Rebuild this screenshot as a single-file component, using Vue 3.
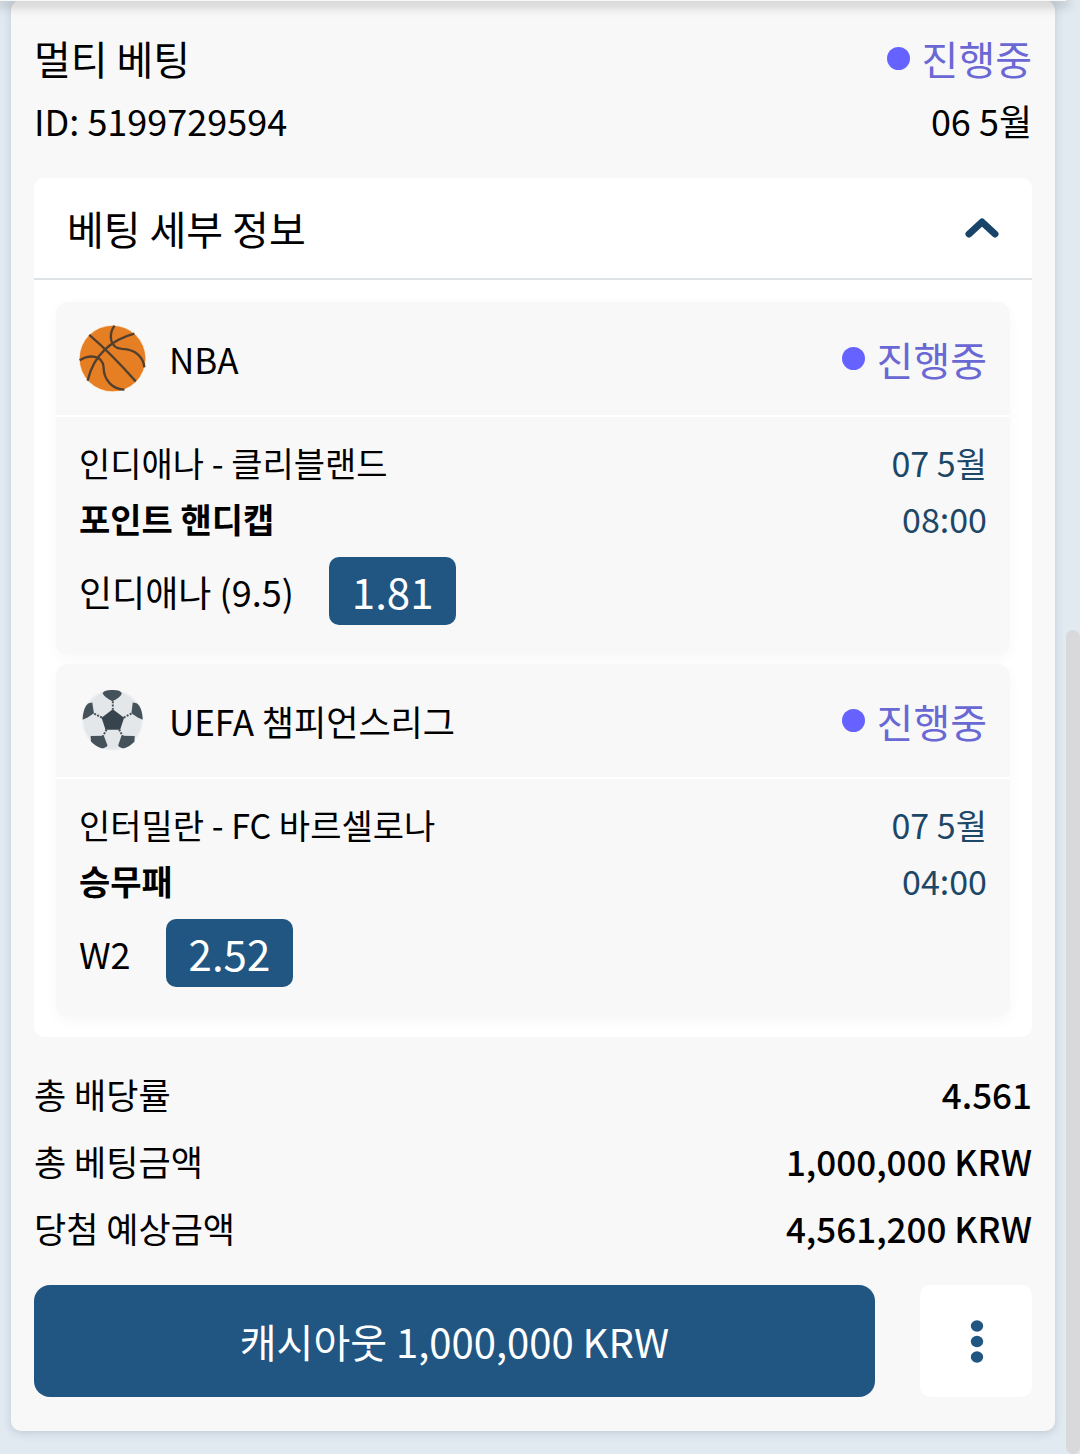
<script setup>
import { ref } from 'vue'

const open = ref(true)

const legs = [
  {
    sport: 'basketball',
    league: 'NBA',
    status: '진행중',
    match: '인디애나 - 클리블랜드',
    date: '07 5월',
    market: '포인트 핸디캡',
    time: '08:00',
    pick: '인디애나 (9.5)',
    odds: '1.81',
  },
  {
    sport: 'soccer',
    league: 'UEFA 챔피언스리그',
    status: '진행중',
    match: '인터밀란 - FC 바르셀로나',
    date: '07 5월',
    market: '승무패',
    time: '04:00',
    pick: 'W2',
    odds: '2.52',
  },
]

const totals = [
  { label: '총 배당률', value: '4.561' },
  { label: '총 베팅금액', value: '1,000,000 KRW' },
  { label: '당첨 예상금액', value: '4,561,200 KRW' },
]
</script>

<template>
  <main class="page">
    <div class="top-edge"></div>
    <div class="scroll-thumb"></div>

    <article class="bet">
      <header class="bet-head">
        <div class="row">
          <h1 class="title">멀티 베팅</h1>
          <span class="status"><i class="dot"></i>진행중</span>
        </div>
        <div class="row meta">
          <span>ID: 5199729594</span>
          <span>06 5월</span>
        </div>
      </header>

      <section class="details">
        <button class="toggle" type="button" :aria-expanded="open" @click="open = !open">
          <span>베팅 세부 정보</span>
          <svg class="chevron" :class="{ closed: !open }" viewBox="0 0 34 22" aria-hidden="true">
            <path d="M4 17 17 5 30 17" />
          </svg>
        </button>

        <ul v-if="open" class="legs">
          <li v-for="leg in legs" :key="leg.league" class="leg">
            <div class="leg-head">
              <svg v-if="leg.sport === 'basketball'" class="ball" viewBox="117 104 202 202" aria-hidden="true">
                <circle cx="218" cy="205" r="101" fill="#fbe3c4" />
                <circle cx="218" cy="205" r="99" fill="#e67e24" />
                <g fill="none" stroke="#52402f" stroke-width="7">
                  <path d="M148 134C190 170 240 220 288 274" />
                  <path d="M284 130C215 148 160 195 143 272" />
                  <path d="M224 106C206 132 208 174 247 176C290 177 312 204 314 232" />
                  <path d="M119 210C150 192 187 195 191 230C191 272 220 298 254 299" />
                </g>
              </svg>
              <svg v-else class="ball" viewBox="118 138 202 202" aria-hidden="true">
                <circle cx="219" cy="238" r="92" fill="#eceff1" />
                <circle cx="219" cy="238" r="87" fill="#e4e7ea" />
                <g fill="#455259">
                  <path d="M189 157C192 149 206 147 219 147S244 149 247 157C245 166 233 174 219 181C205 174 193 166 189 157Z" />
                  <path d="M129 237C129 214 137 192 147 187L158 185 163 217 145 229Z" />
                  <path d="M310 237C310 214 302 192 292 187L280 185 276 217 294 229Z" />
                  <path d="M153 286 193 285 204 314C201 319 193 323 186 323C173 318 160 309 154 302Z" />
                  <path d="M286 286 246 285 236 314C239 319 247 323 254 323C267 318 280 309 285 302Z" />
                </g>
                <path d="M220 205 254 231 242 267H198L186 231Z" fill="#37444d" />
                <g fill="none" stroke="#455259" stroke-width="6" stroke-dasharray="6 4">
                  <path d="M220 181V206M187 230 161 217M253 230 278 217M201 266 190 287M239 266 250 287" />
                </g>
              </svg>
              <h2 class="league">{{ leg.league }}</h2>
              <span class="status"><i class="dot"></i>{{ leg.status }}</span>
            </div>
            <div class="leg-body">
              <div class="row">
                <span>{{ leg.match }}</span>
                <span class="when">{{ leg.date }}</span>
              </div>
              <div class="row">
                <strong>{{ leg.market }}</strong>
                <span class="when">{{ leg.time }}</span>
              </div>
              <div class="pick">
                <span>{{ leg.pick }}</span>
                <span class="odds">{{ leg.odds }}</span>
              </div>
            </div>
          </li>
        </ul>
      </section>

      <dl class="totals">
        <div v-for="t in totals" :key="t.label" class="total">
          <dt>{{ t.label }}</dt>
          <dd>{{ t.value }}</dd>
        </div>
      </dl>

      <footer class="actions">
        <button class="cashout" type="button">캐시아웃 1,000,000 KRW</button>
        <button class="more" type="button" aria-label="더보기">
          <svg viewBox="0 0 14 44" aria-hidden="true">
            <ellipse cx="8" cy="7" rx="6.2" ry="5.8" />
            <ellipse cx="8" cy="22.5" rx="6.2" ry="5.8" />
            <ellipse cx="8" cy="38" rx="6.2" ry="5.8" />
          </svg>
        </button>
      </footer>
    </article>
  </main>
</template>

<style>
body {
  background: #e1e9f1;
}
</style>

<style scoped>
.page {
  position: relative;
  padding: 0 25px 23px 11px;
  overflow: hidden;
  color: #000;
  font-family: "Noto Sans CJK KR", "Noto Sans", sans-serif;
  font-size: 34px;
}

.top-edge {
  position: absolute;
  top: 0;
  left: 0;
  right: 14px;
  height: 1px;
  background: #f7f7f7;
  box-shadow: 0 2px 12px 2px rgba(0, 0, 0, 0.34);
}

.scroll-thumb {
  position: absolute;
  top: 630px;
  right: 0;
  bottom: 0;
  width: 14px;
  border-radius: 7px;
  background: #d9d9db;
}

.bet {
  padding: 27px 23px 34px;
  border-radius: 10px;
  background: #f8f8f8;
  box-shadow: 0 2px 8px rgba(70, 100, 110, 0.22);
}

h1,
h2,
dl,
dd,
ul {
  margin: 0;
  padding: 0;
  font-weight: 400;
}

button {
  border: 0;
  padding: 0;
  color: inherit;
  font: inherit;
  cursor: pointer;
}

.row,
.total {
  display: flex;
  justify-content: space-between;
  align-items: center;
}

.bet-head {
  margin-bottom: 27px;
  line-height: 62px;
}

.title,
.status,
.toggle {
  font-size: 40px;
}

.meta {
  font-size: 36px;
}

.status {
  display: flex;
  align-items: center;
  gap: 12px;
  color: #6a68d4;
}

.dot {
  width: 23px;
  height: 23px;
  border-radius: 50%;
  background: #6562ff;
}

.details {
  border-radius: 10px;
  background: #fff;
}

.toggle {
  display: flex;
  justify-content: space-between;
  align-items: center;
  width: 100%;
  height: 102px;
  padding: 0 33px;
  border-bottom: 2px solid #dfe2e4;
  background: none;
}

.chevron {
  width: 34px;
  height: 22px;
  fill: none;
  stroke: #174468;
  stroke-width: 7;
  stroke-linecap: round;
  stroke-linejoin: round;
}

.chevron.closed {
  transform: rotate(180deg);
}

.legs {
  display: flex;
  flex-direction: column;
  gap: 9px;
  padding: 22px 22px 20px;
  list-style: none;
}

.leg {
  border-radius: 12px;
  background: #f8f8f8;
  box-shadow: 0 4px 14px rgba(0, 0, 0, 0.03);
}

.leg-head {
  display: flex;
  align-items: center;
  height: 113px;
  padding: 0 23px;
  border-bottom: 2px solid #fff;
}

.ball {
  width: 67px;
  height: 67px;
  margin-right: 23px;
}

.league {
  flex: 1;
  font-size: 35px;
}

.leg-body {
  padding: 18px 23px 30px;
  line-height: 56px;
}

.when {
  color: #1d4767;
}

.pick {
  display: flex;
  align-items: center;
  gap: 35px;
  margin-top: 10px;
  font-size: 36px;
}

.odds {
  padding: 0 23px;
  border-radius: 10px;
  background: #215682;
  color: #fff;
  font-size: 42px;
  line-height: 68px;
}

.totals {
  margin: 23px 0 24px;
  font-size: 35px;
  line-height: 67px;
}

.total dd {
  font-weight: 500;
}

.actions {
  display: flex;
  gap: 45px;
}

.cashout {
  flex: 1;
  height: 112px;
  border-radius: 16px;
  background: #215682;
  color: #fff;
  font-size: 40px;
}

.more {
  display: flex;
  justify-content: center;
  align-items: center;
  width: 112px;
  height: 112px;
  border-radius: 10px;
  background: #fff;
}

.more svg {
  width: 14px;
  height: 44px;
  overflow: visible;
  fill: #215682;
}
</style>
